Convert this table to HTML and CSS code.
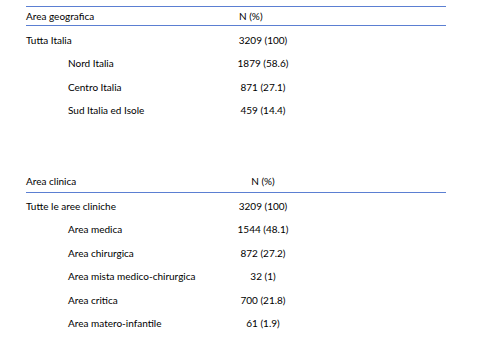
FILE: index.html
```html
<!DOCTYPE html>
<html lang="it">
<head>
<meta charset="utf-8">
<link rel="stylesheet" href="styles.css">
</head>
<body>
<section class="tbl tbl-geo">
  <div class="row head">
    <span class="lab">Area geografica</span>
    <span class="num num-left">N (%)</span>
  </div>
  <div class="body">
    <div class="row"><span class="lab">Tutta Italia</span><span class="num">3209 (100)</span></div>
    <div class="row"><span class="lab sub">Nord Italia</span><span class="num">1879 (58.6)</span></div>
    <div class="row"><span class="lab sub">Centro Italia</span><span class="num">871 (27.1)</span></div>
    <div class="row"><span class="lab sub">Sud Italia ed Isole</span><span class="num">459 (14.4)</span></div>
  </div>
</section>
<section class="tbl tbl-clin">
  <div class="row head">
    <span class="lab">Area clinica</span>
    <span class="num">N (%)</span>
  </div>
  <div class="body">
    <div class="row"><span class="lab">Tutte le aree cliniche</span><span class="num">3209 (100)</span></div>
    <div class="row"><span class="lab sub">Area medica</span><span class="num">1544 (48.1)</span></div>
    <div class="row"><span class="lab sub">Area chirurgica</span><span class="num">872 (27.2)</span></div>
    <div class="row"><span class="lab sub">Area mista medico-chirurgica</span><span class="num">32 (1)</span></div>
    <div class="row"><span class="lab sub">Area critica</span><span class="num">700 (21.8)</span></div>
    <div class="row"><span class="lab sub">Area matero-infantile</span><span class="num">61 (1.9)</span></div>
  </div>
</section>
</body>
</html>
```
FILE: styles.css
```css
html, body {
  margin: 0;
  padding: 0;
  background: #ffffff;
}
body {
  font-family: Lato, "Open Sans", "Liberation Sans", sans-serif;
  font-size: 10px;
  color: #000000;
  padding-left: 26px;
}
.tbl {
  width: 420px;
}
.tbl-geo {
  margin-top: 6px;
  border-top: 1px solid #5b7fd2;
}
.tbl-geo .head {
  height: 18px;
}
.tbl-clin {
  margin-top: 48px;
}
.tbl-clin .head {
  height: 22px;
}
.head {
  border-bottom: 1px solid #5b7fd2;
}
.tbl-geo .body {
  padding-top: 2px;
}
.tbl-clin .body {
  padding-top: 1px;
}
.row {
  display: flex;
  align-items: center;
  height: 23.5px;
}
.lab {
  width: 204px;
  white-space: nowrap;
}
.lab.sub {
  padding-left: 42px;
  box-sizing: border-box;
}
.num {
  width: 66px;
  text-align: center;
  white-space: nowrap;
}
.num-left {
  text-align: left;
  padding-left: 9px;
  box-sizing: border-box;
}
```
